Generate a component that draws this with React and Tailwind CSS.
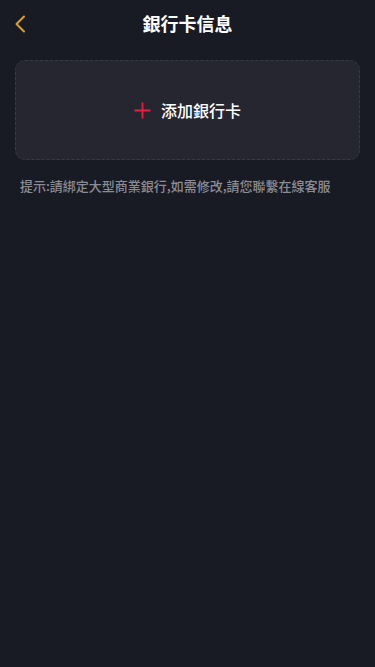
export default function App() {
  return (
    <div
      className="min-h-[667px] w-full bg-[#181a24] text-white"
      style={{ fontFamily: '"Noto Sans CJK TC", "Noto Sans", sans-serif' }}
    >
      <header className="relative flex h-[46px] items-center justify-center">
        <button className="absolute left-[10px] top-[11px] p-1" aria-label="back">
          <svg width="12" height="18" viewBox="0 0 12 18" fill="none">
            <path d="M10 1.5 L2.5 9 L10 16.5" stroke="#dca032" strokeWidth="2" strokeLinecap="round" strokeLinejoin="round" />
          </svg>
        </button>
        <h1 className="text-[18px] font-bold leading-none">銀行卡信息</h1>
      </header>

      <div className="px-[15px] pt-[14px]">
        <button className="flex h-[100px] w-full items-center justify-center gap-[10px] rounded-[10px] border border-dashed border-[#3b3b48] bg-[#262631]">
          <svg width="17" height="17" viewBox="0 0 17 17" fill="none">
            <path d="M8.5 0.5 V16.5 M0.5 8.5 H16.5" stroke="#e5233f" strokeWidth="1.8" />
          </svg>
          <span className="text-[16px] font-medium leading-none text-white">添加銀行卡</span>
        </button>
        <p className="mt-[16px] pl-[5px] text-[13px] font-medium leading-[20px] text-[#8b8c94]">
          提示:請綁定大型商業銀行,如需修改,請您聯繫在線客服
        </p>
      </div>
    </div>
  );
}
